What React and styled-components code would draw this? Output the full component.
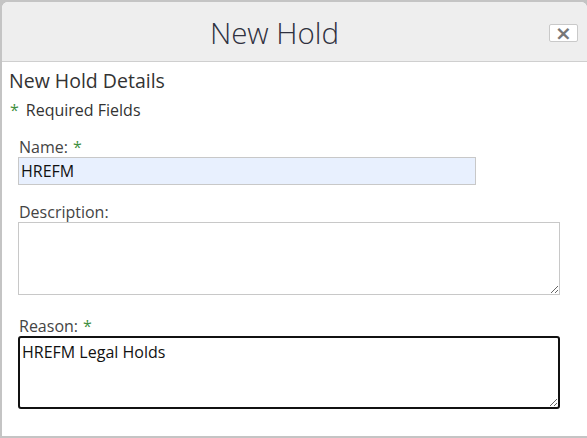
import React, { useEffect, useRef } from 'react';
import styled, { createGlobalStyle } from 'styled-components';

const GlobalStyle = createGlobalStyle`
  html, body {
    margin: 0;
    padding: 0;
    background: #c4c4c4;
  }
  body {
    font-family: 'Open Sans', 'Liberation Sans', sans-serif;
    color: #333;
  }
`;

const Dialog = styled.div`
  margin: 2px 0 0 2px;
  width: 585px;
  height: 434px;
  background: #fff;
  border-radius: 6px 6px 0 0;
  overflow: hidden;
  display: flex;
  flex-direction: column;
`;

const Header = styled.div`
  height: 59px;
  background: #eee;
  border-bottom: 1px solid #cfcfcf;
  display: flex;
  align-items: center;
`;

const Title = styled.h1`
  flex: 1;
  margin: 0;
  text-align: center;
  font-size: 29.5px;
  font-weight: 300;
  color: #2f3140;
  padding-top: 1px;
`;

const CloseButton = styled.button`
  width: 29px;
  height: 18px;
  margin: 3px 9px 0 2px;
  padding: 0;
  background: #fff;
  border: 1px solid #c9c9c9;
  border-radius: 2px;
  color: #777;
  font-family: 'DejaVu Sans', sans-serif;
  font-size: 20px;
  font-weight: bold;
  line-height: 16px;
  display: flex;
  align-items: center;
  justify-content: center;
`;

const Body = styled.div`
  padding: 6px 0 0 7px;
`;

const Heading = styled.h2`
  margin: 0;
  font-size: 19.5px;
  font-weight: 400;
  line-height: 26px;
`;

const Required = styled.div`
  margin-top: 5px;
  font-size: 16px;
  line-height: 22px;
  padding-left: 1px;
`;

const Star = styled.span`
  color: #3f8f3f;
  margin-right: ${(p) => (p.$lead ? '7px' : '0')};
  margin-left: ${(p) => (p.$lead ? '0' : '5px')};
`;

const Fields = styled.div`
  padding: 17px 0 0 9px;
  display: flex;
  flex-direction: column;
`;

const Field = styled.div`
  margin-bottom: ${(p) => p.$gap}px;
`;

const Label = styled.label`
  display: block;
  font-size: 16px;
  line-height: 19px;
  color: #444;
  padding-left: 1px;
`;

const TextInput = styled.input`
  display: block;
  box-sizing: border-box;
  width: 458px;
  height: 28px;
  margin: 0;
  padding: 0 2px;
  background: #e8f0fe;
  border: 1px solid #c8c8c8;
  font-family: 'Open Sans', 'Liberation Sans', sans-serif;
  font-size: 16px;
  color: #111;
  outline: none;
`;

const TextArea = styled.textarea`
  display: block;
  box-sizing: border-box;
  width: 542px;
  height: 73px;
  margin: 0;
  padding: 3px 2px;
  border: ${(p) => (p.$active ? '2px solid #111' : '1px solid #c8c8c8')};
  border-radius: ${(p) => (p.$active ? '3px' : '0')};
  font-family: 'Open Sans', 'Liberation Sans', sans-serif;
  font-size: 16px;
  line-height: 22px;
  color: #111;
  outline: none;
  resize: both;
`;

export default function App() {
  const reasonRef = useRef(null);

  useEffect(() => {
    const el = reasonRef.current;
    if (el) {
      el.focus();
      el.setSelectionRange(el.value.length, el.value.length);
    }
  }, []);

  return (
    <>
      <GlobalStyle />
      <Dialog>
        <Header>
          <Title>New Hold</Title>
          <CloseButton aria-label="Close">×</CloseButton>
        </Header>
        <Body>
          <Heading>New Hold Details</Heading>
          <Required>
            <Star $lead>*</Star>Required Fields
          </Required>
          <Fields>
            <Field $gap={18}>
              <Label>
                Name:<Star>*</Star>
              </Label>
              <TextInput defaultValue="HREFM" />
            </Field>
            <Field $gap={22}>
              <Label>Description:</Label>
              <TextArea />
            </Field>
            <Field $gap={0}>
              <Label>
                Reason:<Star>*</Star>
              </Label>
              <TextArea ref={reasonRef} $active defaultValue="HREFM Legal Holds" />
            </Field>
          </Fields>
        </Body>
      </Dialog>
    </>
  );
}
